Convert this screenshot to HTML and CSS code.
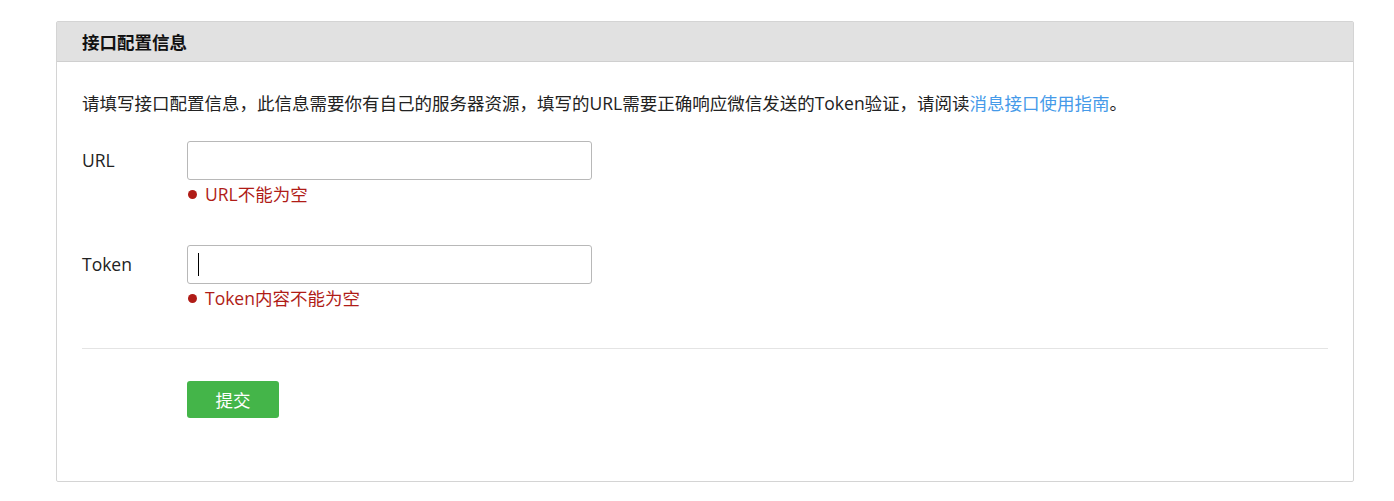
FILE: index.html
```html
<!DOCTYPE html>
<html lang="zh-CN">
<head>
<meta charset="utf-8">
<title>接口配置信息</title>
<link rel="stylesheet" href="styles.css">
</head>
<body>
<div class="panel">
  <div class="panel-header">接口配置信息</div>
  <div class="panel-body">
    <p class="intro">请填写接口配置信息，此信息需要你有自己的服务器资源，填写的URL需要正确响应微信发送的Token验证，请阅读<a class="link" href="#">消息接口使用指南</a>。</p>
    <div class="form">
      <div class="form-row">
        <label class="form-label">URL</label>
        <div class="form-field">
          <div class="input-wrap"><input class="text-input" type="text"></div>
          <div class="form-error"><span class="dot"></span>URL不能为空</div>
        </div>
      </div>
      <div class="form-row">
        <label class="form-label">Token</label>
        <div class="form-field">
          <div class="input-wrap"><input class="text-input" type="text"><span class="caret"></span></div>
          <div class="form-error"><span class="dot"></span>Token内容不能为空</div>
        </div>
      </div>
    </div>
    <div class="divider"></div>
    <div class="actions">
      <button class="btn-submit" type="button">提交</button>
    </div>
  </div>
</div>
</body>
</html>
```
FILE: styles.css
```css
* { box-sizing: border-box; }
html, body { margin: 0; padding: 0; background: #fff; }
body {
  font-family: "Open Sans", "Noto Sans CJK SC", sans-serif;
  font-size: 17.5px;
  color: #222;
  padding: 21px 0 0 56px;
}
.panel {
  width: 1298px;
  border: 1px solid #d4d4d4;
  border-radius: 2px;
  background: #fff;
}
.panel-header {
  height: 40px;
  background: #e1e1e1;
  border-bottom: 1px solid #cfcfcf;
  padding-left: 25px;
  line-height: 40px;
  font-weight: bold;
  color: #111;
}
.panel-body {
  padding: 29px 25px 63px 25px;
}
.intro {
  margin: 0 0 26px 0;
  line-height: 24px;
  white-space: nowrap;
}
.link { color: #459ae9; text-decoration: none; }
.form {
  display: flex;
  flex-direction: column;
  gap: 39px;
}
.form-row { display: flex; }
.form-label {
  width: 105px;
  line-height: 39px;
  color: #222;
}
.form-field { display: flex; flex-direction: column; }
.input-wrap { position: relative; width: 405px; height: 39px; }
.text-input {
  width: 405px;
  height: 39px;
  border: 1px solid #b8b8b8;
  border-radius: 3px;
  padding: 0 10px;
  font: inherit;
  outline: none;
}
.caret {
  position: absolute;
  left: 11px;
  top: 8px;
  width: 1px;
  height: 23px;
  background: #000;
}
.form-error {
  margin-top: 2px;
  line-height: 24px;
  color: #b01c17;
  display: flex;
  align-items: center;
}
.dot {
  width: 9px;
  height: 9px;
  border-radius: 50%;
  background: #b01c17;
  margin: 1px 8px 0 1px;
}
.divider {
  height: 1px;
  background: #e4e4e4;
  margin-top: 38px;
}
.actions { padding: 32px 0 0 105px; }
.btn-submit {
  width: 92px;
  height: 37px;
  border: none;
  border-radius: 3px;
  background: #44b549;
  color: #fff;
  font: inherit;
  padding: 0;
  cursor: pointer;
}
```
